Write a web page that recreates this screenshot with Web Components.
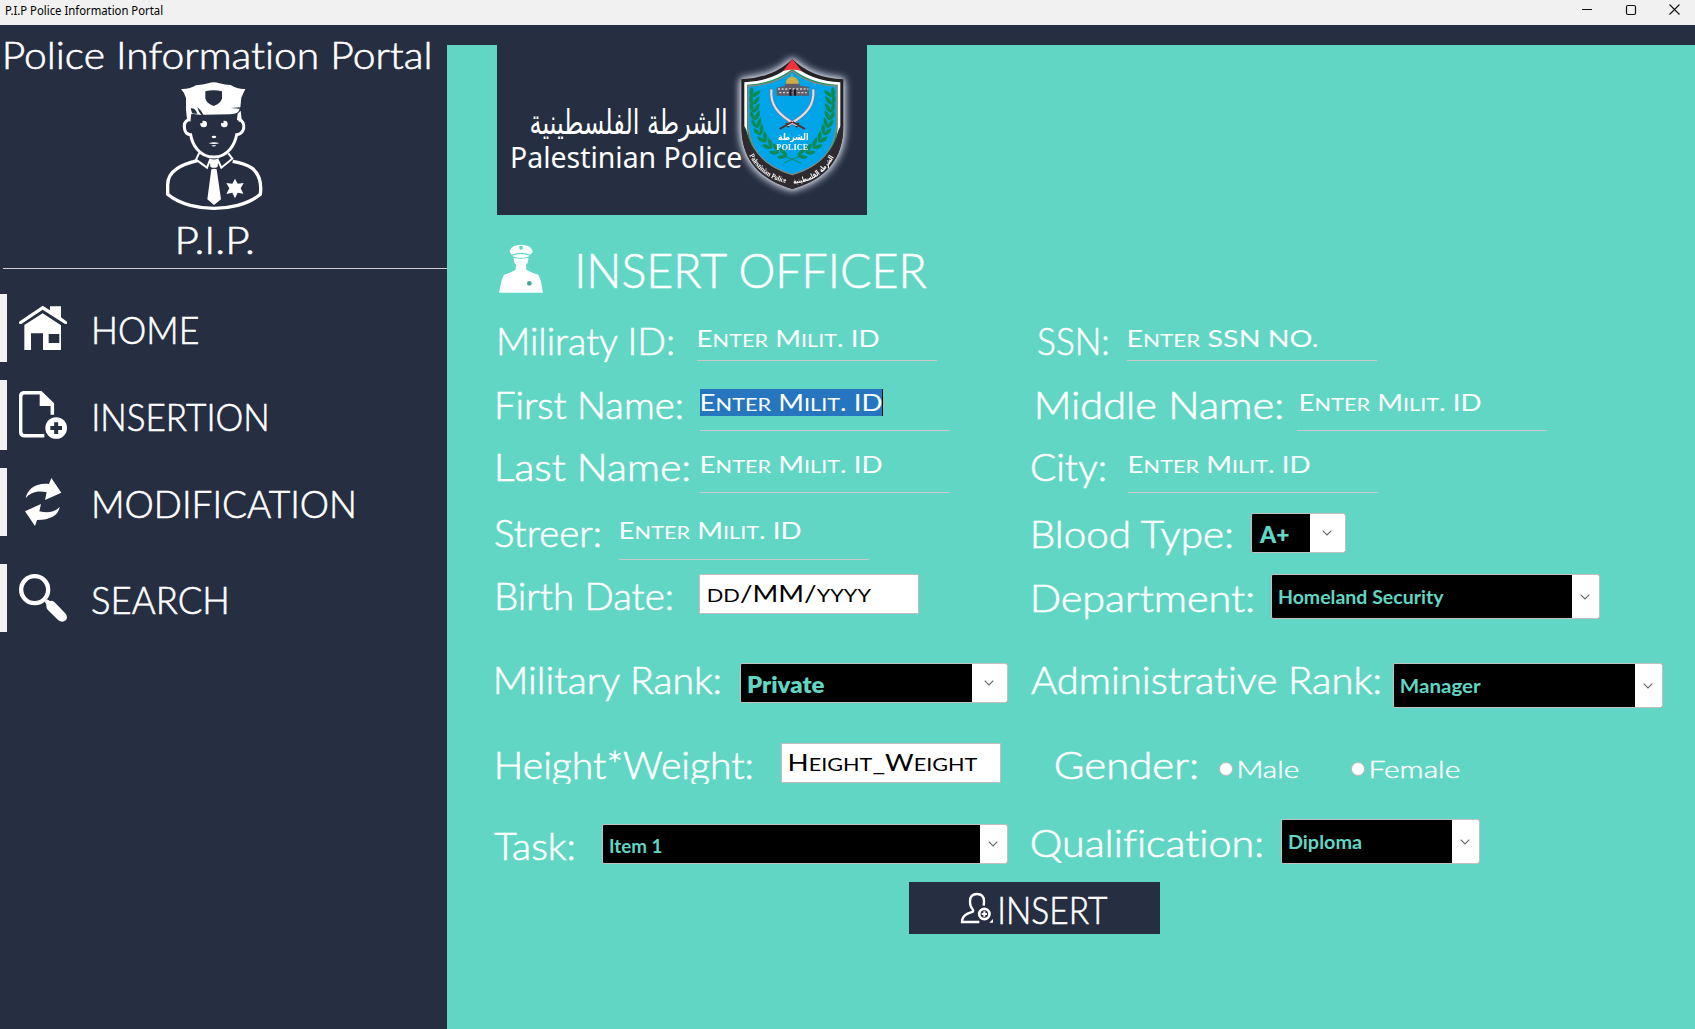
<!DOCTYPE html>
<html lang="en">
<head>
<meta charset="utf-8">
<title>P.I.P Police Information Portal</title>
<style>
  html, body { margin: 0; height: 100%; overflow: hidden; }
  body { background: #62d6c4; font-family: Lato, "Liberation Sans", sans-serif; color: #fff; }
</style>
</head>
<body>
<pip-app></pip-app>
<script>
const px = v => v + 'px';

/* Base: every element takes a left gap and a vertical offset inside its flex row. */
class Base extends HTMLElement {
  num(name, fallback = 0) { return this.hasAttribute(name) ? parseFloat(this.getAttribute(name)) : fallback; }
  connectedCallback() {
    if (this.shadowRoot) return;
    const root = this.attachShadow({ mode: 'open' });
    root.innerHTML = `<style>
      :host { display: block; flex: none; box-sizing: border-box; margin-left: ${px(this.num('gap'))}; margin-top: ${px(this.num('dy'))}; }
      </style>` + this.view();
    this.ready && this.ready(root);
  }
}

/* One line of text whose ink spans exactly "w" pixels, with its baseline "size" + 1 pixels under the top. */
customElements.define('fit-text', class extends Base {
  view() {
    const s = this.num('size', 37), light = !this.hasAttribute('weight');
    return `<style>
      :host { width: ${px(this.num('w'))}; height: ${px(this.num('h', s * 1.25))}; ${this.hasAttribute('clip') ? 'overflow: hidden;' : ''} }
      span { display: inline-block; white-space: pre; transform-origin: 0 0; line-height: ${px(s)};
        font-size: ${px(s)}; font-weight: ${this.getAttribute('weight') || 300};
        font-family: ${this.getAttribute('face') || 'Lato'}, "DejaVu Sans", sans-serif;
        ${light ? `-webkit-text-stroke: ${s > 30 ? .6 : .4}px currentColor;` : ''}
        ${this.hasAttribute('face') ? '' : 'font-variant-ligatures: none; letter-spacing: .01px;'}
        font-variant-caps: ${this.hasAttribute('caps') ? 'small-caps' : 'normal'}; }
      ::slotted(small) { font-size: 1.13em; line-height: 0; }
      div { height: ${px(s)}; line-height: ${px(s)}; display: flex; direction: ltr; }
    </style><div><span><slot></slot></span></div>`;
  }
  ready(root) {
    const s = this.num('size', 37), span = root.querySelector('span'), caps = this.hasAttribute('caps');
    const c = document.createElement('canvas').getContext('2d');
    const set = size => {
      c.font = `${this.getAttribute('weight') || 300} ${size}px ${this.getAttribute('face') || 'Lato'}, "DejaVu Sans", sans-serif`;
      if (!this.hasAttribute('face')) c.letterSpacing = '0.01px';
      c.fontVariantCaps = caps ? 'small-caps' : 'normal';
    };
    set(s);
    const text = this.textContent, m = c.measureText(text);
    let left = -m.actualBoundingBoxLeft, right = m.actualBoundingBoxRight;
    if (caps) {
      /* Lowercase runs are drawn as taller small capitals. */
      const tail = m.width - right;
      let total = 0;
      this.innerHTML = text.replace(/[a-z]+/g, '<small>$&</small>');
      for (const run of text.match(/[a-z]+|[^a-z]+/g)) {
        set(/[a-z]/.test(run) ? s * 1.13 : s);
        total += c.measureText(run).width;
      }
      right = total - tail;
    }
    const k = this.num('w') / (right - left);
    const base = s / 2 + (m.fontBoundingBoxAscent - m.fontBoundingBoxDescent) / 2;
    span.style.transform = `translate(${-left * k}px, ${s + 1 - base}px) scaleX(${k})`;
  }
});

customElements.define('title-bar', class extends Base {
  view() { return `<style>
    :host { display: flex; height: 25px; background: #f1f1f1; color: #000; }
    svg { margin-left: auto; flex: none; }
  </style>
  <fit-text gap="5.5" dy="2" size="12" w="157" weight="400" face="'Noto Sans'">P.I.P Police Information Portal</fit-text>
  <svg width="120" height="25" fill="none" stroke="#111" stroke-width="1">
    <path d="M7 9.5h10"/><rect x="51.5" y="5.5" width="9" height="9" rx="1.5" stroke-width="1.2"/><path d="M94.500 4.500l10 10m0-10l-10 10" stroke-width="1.1"/>
  </svg>`; }
});

const ICONS = {
  home: `<svg viewBox="57 72 144 144"><path fill="#fff" d="M128 77L150 91V79H183V112L201 125V132L194 131L128 89L64 132L57 131V125ZM128 100L183 136V210H129V160H93V210H73V135ZM146 162V189H178V162Z" fill-rule="evenodd"/></svg>`,
  insertion: `<svg viewBox="57 333 144 144" fill="none"><path d="M133 467H74Q62 467 62 455V350Q62 338 74 338H122L157 372V404" stroke="#fff" stroke-width="10.500"/><path fill="#fff" d="M119 338V378H160L157 369L125 336Z"/><circle cx="168.500" cy="444" r="32.500" fill="#fff"/><path d="M151 444H186M168.500 427V462" stroke="#252f41" stroke-width="12"/></svg>`,
  modification: `<svg viewBox="57 594 144 144" fill="#fff"><path d="M77 655C82 629 104 608 147 612L154 594L184 638L135 660L140 637C113 631 91 637 77 655Z"/><path d="M179 680C176 704 154 720 111 720L105 738L75 694L123 672L118 694C142 699 164 698 179 680Z"/></svg>`,
  search: `<svg viewBox="57 882 144 144"><circle cx="104" cy="929" r="40.500" fill="none" stroke="#fff" stroke-width="13"/><path fill="#fff" d="M134 965L141 958L150 963Q158 960 166 969L197 1001Q204 1011 198 1020Q187 1030 175 1021L143 989Q138 984 139 973Z"/></svg>`,
};

customElements.define('nav-item', class extends Base {
  view() { return `<style>
    :host { display: flex; height: ${px(this.num('h', 68))}; }
    i { width: 7px; background: #f1f1f1; }
    svg { display: block; width: 48px; height: 48px; margin: ${px(this.num('iy', 10))} 0 0 12px; }
  </style><i></i>${ICONS[this.getAttribute('icon')]}
  <fit-text gap="${this.num('tx')}" dy="${this.num('ty', 12)}" w="${this.num('w')}">${this.getAttribute('label')}</fit-text>`; }
});

customElements.define('officer-figure', class extends Base {
  view() { return `<style>:host { width: 100px; height: 130px; } svg { display: block; }</style>
  <svg width="100" height="130" viewBox="492 243 300 390" fill="none" stroke="#fff">
    <path fill="#fff" stroke="none" d="M543 267Q570 268 588 256Q610 254 625 250Q641 243 658 250Q675 255 692 255Q712 268 736 267Q729 281 724 293L721 322L692 324L719 326Q718 341 690 343L610 344L603 332L592 321L597 335L604 345L574 341L571 366L561 358L558 329V294Q555 280 543 267Z"/>
    <path fill="#252f41" stroke="none" d="M616 274Q641 268 666 274V295Q663 310 641 318Q619 310 616 295Z"/>
    <path fill="#252f41" stroke="none" d="M572 325Q585 323 592 341Q576 343 575 335Z"/>
    <path fill="#fff" stroke="none" d="M713 341L722 332L725 358L718 366L711 358Z"/>
    <path stroke-width="9" d="M566 359Q549 366 554 388Q557 403 572 404C576 430 596 471 641 471S705 430 710 404Q726 403 731 386Q734 365 718 359"/>
    <g fill="#fff" stroke="none"><circle cx="611" cy="372" r="10"/><circle cx="673" cy="372" r="10"/><ellipse cx="642" cy="411" rx="7" ry="3.500"/><path d="M626 430Q642 424 658 430Q642 434 626 430ZM634 436h15q-7 7-15 0Z"/></g>
    <g fill="#252f41" stroke="none"><circle cx="604" cy="366" r="4"/><circle cx="667" cy="366" r="4"/></g>
    <path stroke-width="6" d="M598 458L588 479L621 503L631 477M685 460L697 476L664 503L652 477"/>
    <path stroke-width="10" d="M592 482C548 493 503 510 503 554V583C540 615 600 625 642 625S744 615 781 583C785 552 779 524 757 505C740 493 715 487 698 484"/>
    <path fill="#fff" stroke="none" d="M629 475Q642 482 655 475L653 500Q642 507 631 500ZM634 508Q642 505 650 508L663 598L642 615L622 598Z"/>
    <path fill="#fff" stroke="none" d="M705 536L713 551L731 549L722 565L730 581L713 578L705 595L697 578L679 582L688 565L679 549L697 551Z"/>
  </svg>`; }
});

customElements.define('side-bar', class extends Base {
  view() { return `<style>
    :host { display: flex; flex-direction: column; width: 447px; background: #252f41; }
    hr { border: 0; background: #d2ccd0; height: 1px; width: 444px; margin: 6px 0 25px 3px; flex: none; }
    nav { display: flex; flex-direction: column; }
  </style>
  <fit-text gap="5" dy="6" w="424" h="47">Police Information Portal</fit-text>
  <officer-figure gap="164" dy="3"></officer-figure>
  <fit-text gap="178" dy="5" h="46" w="75">P.I.P.</fit-text>
  <hr>
  <nav>
    <nav-item icon="home" label="HOME" tx="27" w="104"></nav-item>
    <nav-item icon="insertion" label="INSERTION" dy="18" h="70" iy="11" ty="13" tx="27" w="173"></nav-item>
    <nav-item icon="modification" label="MODIFICATION" dy="18" tx="26.500" w="260"></nav-item>
    <nav-item icon="search" label="SEARCH" dy="28" tx="25" w="135"></nav-item>
  </nav>`; }
});

/* Leaf sprays of the crest: pairs of leaves set along each side's stem. */
const spray = [[93,144,24],[92,166,12],[94,189,4],[96,212,-4],[101,235,-12],[109,258,-24],[121,280,-36],[137,300,-48],[157,317,-62],[180,329,-74]]
  .map(([x, y, a]) => `<g transform="translate(${x + 8} ${y}) rotate(${a}) scale(1.25)"><path d="M0 12Q-16 2 -9 -12Q2 -4 0 12ZM0 12Q-2 -5 13 -13Q16 3 0 12Z"/></g>`).join('');

customElements.define('police-crest', class extends Base {
  view() { return `<style>:host { width: 116px; height: 140px; } svg { display: block; overflow: visible; filter: drop-shadow(0 0 4px #d5dbea) drop-shadow(0 0 2px #b5bccb); }</style>
  <svg width="116" height="140" viewBox="42 24 348 420">
    <defs><clipPath id="s"><path d="M217 42Q160 99 64 103V242C64 342 116 402 217 432C318 402 370 342 370 242V103Q274 99 217 42Z"/></clipPath></defs>
    <path fill="#242124" d="M217 42Q160 99 64 103V242C64 342 116 402 217 432C318 402 370 342 370 242V103Q274 99 217 42Z"/>
    <path fill="#fff" d="M217 58Q160 109 73 112V240C73 330 125 385 217 414C309 385 361 330 361 240V112Q274 109 217 58Z"/>
    <path fill="#109457" d="M217 72Q160 116 81 119V240C81 322 130 376 217 402C304 376 353 322 353 240V119Q274 116 217 72Z"/>
    <path clip-path="url(#s)" fill="#2e2a2d" d="M64 236C86 250 78 270 96 303C124 348 165 378 217 388C269 378 310 348 338 303C356 270 350 250 370 236V440H64Z"/>
    <path fill="#00a4e8" stroke="#8a8580" stroke-width="4" d="M217 78Q160 122 84 123V236C88 320 137 365 217 389C297 365 346 320 350 236V123Q274 122 217 78Z"/>
    <path fill="#f0323c" d="M217 42L245 78Q217 69 189 78Z"/>
    <path fill="#d3ab45" d="M197 118Q197 99 216 94Q237 99 237 118Z"/><path stroke="#c9a23d" stroke-width="3" d="M216 97V87"/>
    <path fill="#625b68" d="M170 128L195 122V116H239V122L267 125V152H170Z"/><path stroke="#d9d3cd" stroke-width="4" stroke-dasharray="6 5" d="M174 132H265M178 143H260"/><path fill="#161a2c" d="M208 133h7v19h-7zM222 133h6v19h-6z"/>
    <g fill="#108a55">${spray}<g transform="translate(434 0) scale(-1 1)">${spray}</g></g>
    <path stroke="#108a55" stroke-width="3" fill="none" d="M190 355Q217 342 244 333M244 355Q217 342 190 333"/>
    <g fill="none" stroke-linecap="round"><g stroke="#8d7480" stroke-width="9"><path d="M154 136C151 176 169 207 230 240M280 136C283 176 265 207 204 240"/></g><g stroke="#ead9de" stroke-width="6.500"><path d="M154 136C151 176 169 207 230 240M280 136C283 176 265 207 204 240"/></g></g>
    <path stroke="#5a2a22" stroke-width="6" fill="none" d="M218 231L255 252M216 231L179 252M236 234l-8 13M198 234l8 13"/>
    <g fill="#fff" text-anchor="middle" font-weight="700"><text x="220" y="284" font-size="29" font-family="DejaVu Sans" textLength="92" lengthAdjust="spacingAndGlyphs">الشرطة</text><text x="217" y="314" font-size="24" font-family="Liberation Serif" textLength="96" lengthAdjust="spacingAndGlyphs">POLICE</text></g>
    <path id="l" fill="none" d="M88 331C113 382 160 411 222 418"/><path id="r" fill="none" d="M220 416C282 411 320 382 351 320"/>
    <g fill="#fff" font-weight="700"><text font-size="22" font-family="Liberation Serif"><textPath href="#l" textLength="142" lengthAdjust="spacingAndGlyphs">Palestinian Police</textPath></text>
    <text font-size="22" font-family="DejaVu Sans"><textPath href="#r" textLength="152" lengthAdjust="spacingAndGlyphs">الشرطة الفلسطينية</textPath></text></g>
  </svg>`; }
});

customElements.define('brand-panel', class extends Base {
  view() { return `<style>
    :host { display: flex; width: 370px; height: 170px; background: #252f41; }
    .names { width: 237px; display: flex; flex-direction: column; }
  </style>
  <div class="names">
    <fit-text gap="34" dy="54" size="34" h="39" w="195" weight="400" face="'DejaVu Sans'">الشرطة الفلسطينية</fit-text>
    <fit-text gap="15" size="29" w="229" weight="400" face="'Noto Sans'">Palestinian Police</fit-text>
  </div>
  <police-crest dy="8"></police-crest>`; }
});

customElements.define('officer-badge', class extends Base {
  view() { return `<style>:host { width: 45px; height: 50px; } svg { display: block; }</style>
  <svg width="45" height="50" viewBox="57 42 135 150" fill="#fff">
    <path d="M89 65Q92 49 112 46Q123 43 135 46Q155 49 158 65L151 74Q123 63 95 74Z"/><path fill="#62d6c4" d="M118 48h10v9l-5 3l-5-3z"/>
    <path d="M97 77Q123 67 149 77Q142 83 123 83T97 77ZM101 84Q123 89 145 84Q145 99 138 105L139 119Q155 128 175 134L182 151L189 188H57L65 151L72 134Q92 128 107 119L108 105Q101 99 101 84Z"/>
    <circle cx="148" cy="160" r="7" fill="#3fa895"/>
  </svg>`; }
});

/* Text entry: underlined by default, a white box with the "boxed" attribute. */
customElements.define('text-field', class extends Base {
  view() {
    const tw = this.num('tw', 180), value = this.getAttribute('value');
    if (this.hasAttribute('boxed')) return `<style>
      :host { width: 220px; height: 40px; background: #fff; border: 1px solid #c4bcbe; color: #000; }
    </style><fit-text caps gap="7.500" dy="2.500" size="23" weight="400" w="${tw}">${value}</fit-text>`;
    return `<style>
      :host { width: ${px(this.num('w', 250))}; height: ${px(this.num('h', 50))}; border-bottom: 1px solid #cbc9cc; padding-top: 8px; }
      .t { width: 182px; height: 27px; display: flex; }
      .on { background: #2675bf; border-right: 1px solid #000; }
    </style><div class="t ${this.hasAttribute('selected') ? 'on' : ''}"><fit-text caps gap="${this.num('tx', 1.5)}" dy="-2.500" size="23" weight="400" w="${tw}">${value}</fit-text></div>`;
  }
});

customElements.define('combo-box', class extends Base {
  view() { const s = this.num('size', 18), arrow = this.num('arrow', 27); return `<style>
    :host { display: flex; width: ${px(this.num('w'))}; height: ${px(this.num('h', 40))}; background: #000; border: 1px solid #c6bfc1; border-radius: 2px; color: #62d6c4; overflow: hidden; }
    b { margin-left: auto; box-sizing: border-box; padding-right: 2px; width: ${px(arrow)}; background: #fff; display: flex; align-items: center; justify-content: center; }
  </style><fit-text gap="7" dy="${this.num('base', 29) - s - 1.5}" size="${s}" weight="${s > 20 ? 800 : 700}" w="${this.num('tw')}">${this.getAttribute('value')}</fit-text>
  <b><svg width="10" height="6" fill="none" stroke="#666" stroke-width="1.100"><path d="M.7 .7L5 5L9.300 .7"/></svg></b>`; }
});

customElements.define('radio-option', class extends Base {
  view() { return `<style>
    :host { display: flex; }
    i { width: 14px; height: 14px; border-radius: 50%; background: #fff; border: 1px solid #c3b4b4; box-sizing: border-box; margin-top: 7px; }
  </style><i></i><fit-text gap="6.500" dy="-1" size="23" w="${this.num('tw')}">${this.getAttribute('label')}</fit-text>`; }
});

customElements.define('form-row', class extends Base {
  view() { return `<style>
    :host { display: grid; grid-template-columns: 537px 1fr; height: ${px(this.num('h'))}; }
    div { display: flex; align-items: flex-start; }
  </style><div><slot name="a"></slot></div><div><slot name="b"></slot></div>`; }
});

customElements.define('insert-button', class extends Base {
  view() { return `<style>
    :host { display: flex; width: 251px; height: 52px; background: #252f41; }
    svg { margin: 10px 0 0 51px; }
  </style>
  <svg width="34" height="32" viewBox="210 66 102 96" fill="none" stroke="#fff" stroke-width="7">
    <path d="M268 156H216Q216 139 233 131L249 125Q251 121 246 115Q240 109 240 94Q240 72 261 72Q282 72 282 94Q282 101 281 107"/>
    <circle cx="283" cy="132" r="15.500" stroke-width="8"/><path d="M275 132h16M283 124v16" stroke-width="6"/><path d="M298 158L309 147V158Z" fill="#fff" stroke="none"/>
  </svg>
  <fit-text gap="6" dy="4" w="107">INSERT</fit-text>`; }
});

customElements.define('officer-form', class extends Base {
  view() { return `<style>
    :host { flex: 1; padding-left: 47px; }
    header { display: flex; height: 102px; align-items: flex-start; }
  </style>
  <brand-panel gap="3"></brand-panel>
  <header><officer-badge gap="5" dy="29"></officer-badge><fit-text gap="34.500" dy="24" size="48" w="349">INSERT OFFICER</fit-text></header>

  <form-row h="64">
    <fit-text slot="a" gap="5" w="175">Miliraty ID:</fit-text>
    <text-field slot="a" gap="23" w="240" h="44" value="Enter Milit. ID"></text-field>
    <fit-text slot="b" gap="6.500" w="70">SSN:</fit-text>
    <text-field slot="b" gap="19.500" h="44" tw="189" tx="1.500" value="Enter SSN NO."></text-field>
  </form-row>
  <form-row h="62">
    <fit-text slot="a" gap="3" w="185">First Name:</fit-text>
    <text-field slot="a" gap="18" selected value="Enter Milit. ID"></text-field>
    <fit-text slot="b" gap="6" w="245">Middle Name:</fit-text>
    <text-field slot="b" gap="15" tx="3.500" value="Enter Milit. ID"></text-field>
  </form-row>
  <form-row h="66">
    <fit-text slot="a" gap="3" w="192">Last Name:</fit-text>
    <text-field slot="a" gap="11" value="Enter Milit. ID"></text-field>
    <fit-text slot="b" gap="1" w="73">City:</fit-text>
    <text-field slot="b" gap="23" value="Enter Milit. ID"></text-field>
  </form-row>
  <form-row h="63">
    <fit-text slot="a" gap="1" w="105">Streer:</fit-text>
    <text-field slot="a" gap="19" h="51" value="Enter Milit. ID"></text-field>
    <fit-text slot="b" gap="1.500" dy="1" w="200">Blood Type:</fit-text>
    <combo-box slot="b" gap="18.500" dy="4" w="95" arrow="35" size="23" tw="30" value="A+"></combo-box>
  </form-row>
  <form-row h="84">
    <fit-text slot="a" gap="3" w="175">Birth Date:</fit-text>
    <text-field slot="a" gap="27" dy="2" boxed tw="163" value="dd/MM/yyyy"></text-field>
    <fit-text slot="b" gap="1.500" dy="2" w="220">Department:</fit-text>
    <combo-box slot="b" gap="18.500" dy="2" w="329" h="45" tw="165" value="Homeland Security"></combo-box>
  </form-row>
  <form-row h="85">
    <fit-text slot="a" gap="2" w="225">Military Rank:</fit-text>
    <combo-box slot="a" gap="19" dy="7" w="268" arrow="35" size="23" tw="76" value="Private"></combo-box>
    <fit-text slot="b" gap="0" w="349">Administrative Rank:</fit-text>
    <combo-box slot="b" gap="13" dy="7" w="270" h="45" tw="80" value="Manager"></combo-box>
  </form-row>
  <form-row h="78">
    <fit-text slot="a" gap="3" w="255" h="42.500" clip>Height*Weight:</fit-text>
    <text-field slot="a" gap="29" dy="2" boxed tw="188" value="Height_Weight"></text-field>
    <fit-text slot="b" gap="25" w="141">Gender:</fit-text>
    <radio-option slot="b" gap="21.500" dy="14" tw="59" label="Male"></radio-option>
    <radio-option slot="b" gap="52.500" dy="14" tw="88" label="Female"></radio-option>
  </form-row>
  <form-row h="63">
    <fit-text slot="a" gap="0" dy="3" w="80">Task:</fit-text>
    <combo-box slot="a" gap="28" dy="5" w="406" base="28" tw="52" value="Item 1"></combo-box>
    <fit-text slot="b" gap="1" w="230">Qualification:</fit-text>
    <combo-box slot="b" gap="19" w="199" h="45" tw="73" value="Diploma"></combo-box>
  </form-row>
  <insert-button gap="415"></insert-button>`; }
});

customElements.define('pip-app', class extends Base {
  view() { return `<style>
    :host { display: flex; flex-direction: column; height: 1029px; }
    main { flex: 1; display: flex; }
    section { flex: 1; display: flex; flex-direction: column; background: #62d6c4; border-top: 20px solid #252f41; }
  </style><title-bar></title-bar><main><side-bar></side-bar><section><officer-form></officer-form></section></main>`; }
});
</script>
</body>
</html>
